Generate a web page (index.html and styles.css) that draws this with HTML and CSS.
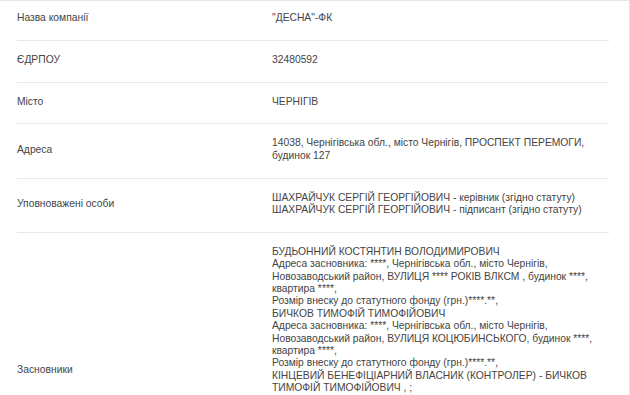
FILE: index.html
```html
<!DOCTYPE html>
<html lang="uk">
<head>
<meta charset="utf-8">
<title>"ДЕСНА"-ФК</title>
<link rel="stylesheet" href="styles.css">
</head>
<body>
<div class="panel">
  <table class="info">
    <tr class="first">
      <td class="label">Назва компанії</td>
      <td class="value">"ДЕСНА"-ФК</td>
    </tr>
    <tr>
      <td class="label">ЄДРПОУ</td>
      <td class="value">32480592</td>
    </tr>
    <tr>
      <td class="label">Місто</td>
      <td class="value">ЧЕРНІГІВ</td>
    </tr>
    <tr>
      <td class="label">Адреса</td>
      <td class="value">14038, Чернігівська обл., місто Чернігів, ПРОСПЕКТ ПЕРЕМОГИ,<br>будинок 127</td>
    </tr>
    <tr>
      <td class="label">Уповноважені особи</td>
      <td class="value">ШАХРАЙЧУК СЕРГІЙ ГЕОРГІЙОВИЧ - керівник (згідно статуту)<br>ШАХРАЙЧУК СЕРГІЙ ГЕОРГІЙОВИЧ - підписант (згідно статуту)</td>
    </tr>
    <tr>
      <td class="label">Засновники</td>
      <td class="value">БУДЬОННИЙ КОСТЯНТИН ВОЛОДИМИРОВИЧ<br>Адреса засновника: ****, Чернігівська обл., місто Чернігів,<br>Новозаводський район, ВУЛИЦЯ **** РОКІВ ВЛКСМ , будинок ****,<br>квартира ****,<br>Розмір внеску до статутного фонду (грн.)****.**,<br>БИЧКОВ ТИМОФІЙ ТИМОФІЙОВИЧ<br>Адреса засновника: ****, Чернігівська обл., місто Чернігів,<br>Новозаводський район, ВУЛИЦЯ КОЦЮБИНСЬКОГО, будинок ****,<br>квартира ****,<br>Розмір внеску до статутного фонду (грн.)****.**,<br>КІНЦЕВИЙ БЕНЕФІЦІАРНИЙ ВЛАСНИК (КОНТРОЛЕР) - БИЧКОВ<br>ТИМОФІЙ ТИМОФІЙОВИЧ , ;<br>ЧЕРНІГІВСЬКА ОБЛ., М. ЧЕРНІГІВ, ВУЛ. КОЦЮБИНСЬКОГО, БУД.<br>****, КВ. ****,<br>КІНЦЕВИЙ БЕНЕФІЦІАРНИЙ ВЛАСНИК (КОНТРОЛЕР) - БУДЬОННИЙ<br>КОСТЯНТИН ВОЛОДИМИРОВИЧ , ;<br>ЧЕРНІГІВСЬКА ОБЛ., М. ЧЕРНІГІВ, ВУЛ. **** РОКІВ ВЛКСМ,<br>БУД. ****, КВ. ****,<br>Розмір внеску до статутного фонду (грн.)****.**,<br>Статутний капітал (грн.): ****.**</td>
    </tr>
  </table>
</div>
</body>
</html>
```

FILE: styles.css
```css
html {
  overflow: hidden;
}

body {
  margin: 0;
  background: #ffffff;
  font-family: "Liberation Sans", Arial, sans-serif;
  font-size: 10.3px;
  line-height: 12.4px;
  color: #444444;
}

.panel {
  width: 630px;
  border-top: 1px solid #e6e6e6;
  border-right: 1px solid #e6e6e6;
  padding-left: 17px;
  box-sizing: border-box;
}

.info {
  width: 592px;
  table-layout: fixed;
  border-collapse: collapse;
}

.info td {
  padding: 13px 0 15.4px 0;
  vertical-align: middle;
  border-bottom: 1px solid #e8e8e8;
}

.info .first td {
  padding-top: 11px;
}

.info .label {
  width: 255px;
}

.info .value {
  white-space: nowrap;
}
```
